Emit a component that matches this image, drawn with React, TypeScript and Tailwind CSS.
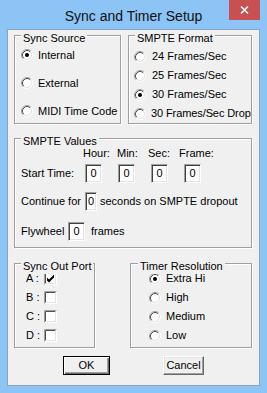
import React from 'react';

const uiFont = "font-['Liberation_Sans',Arial,sans-serif]";

function Radio({ checked = false }: { checked?: boolean }) {
  return (
    <svg width="12" height="12" viewBox="0 0 12 12" className="shrink-0">
      <circle cx="6" cy="6" r="4.5" fill="#fff" />
      {/* outer ring: dark top-left, light bottom-right */}
      <path d="M2.11 9.89 A5.5 5.5 0 0 1 9.89 2.11" fill="none" stroke="#a0a0a0" strokeWidth="1" />
      <path d="M9.89 2.11 A5.5 5.5 0 0 1 2.11 9.89" fill="none" stroke="#ffffff" strokeWidth="1" />
      <path d="M2.82 9.18 A4.5 4.5 0 0 1 9.18 2.82" fill="none" stroke="#505050" strokeWidth="1" />
      <path d="M9.18 2.82 A4.5 4.5 0 0 1 2.82 9.18" fill="none" stroke="#e3e3e3" strokeWidth="1" />
      {checked && <circle cx="6" cy="6" r="2" fill="#000" />}
    </svg>
  );
}

function Check({ checked = false }: { checked?: boolean }) {
  return (
    <svg width="13" height="13" viewBox="0 0 13 13" className="shrink-0">
      <rect x="0" y="0" width="13" height="13" fill="#fff" />
      <path d="M0.5 12.5 V0.5 H12.5" fill="none" stroke="#a0a0a0" />
      <path d="M1.5 11.5 V1.5 H11.5" fill="none" stroke="#505050" />
      <path d="M1.5 11.5 H11.5 V1.5" fill="none" stroke="#e3e3e3" />
      {checked && <path d="M3 5.5 L5 7.5 L10 2.5 L10 5.5 L5 10.5 L3 8.5 Z" fill="#000" />}
    </svg>
  );
}

function Group({ label, className, children, labelLeft = 'left-[6px]' }: {
  label: string; className: string; children: React.ReactNode; labelLeft?: string;
}) {
  return (
    <div className={`relative border border-[#a0a0a0] shadow-[inset_1px_1px_0_#fff,1px_1px_0_#fff] ${className}`}>
      <span className={`absolute -top-[5px] ${labelLeft} bg-[#f0f0f0] px-[2px] leading-[15px]`}>{label}</span>
      {children}
    </div>
  );
}

function Edit({ w = 'w-[17px]' }: { w?: string }) {
  return (
    <div className={`${w} h-[19px] bg-white border border-t-[#a0a0a0] border-l-[#a0a0a0] border-b-white border-r-white shadow-[inset_1px_1px_0_#404040,inset_-1px_-1px_0_#e3e3e3] flex items-center justify-center`}>
      0
    </div>
  );
}

export default function App() {
  return (
    <div className="w-[267px] h-[393px] bg-[#8bc4f5] flex flex-col overflow-hidden">
      {/* title bar */}
      <div className="h-[29px] grid grid-cols-[1fr_auto_1fr] items-start">
        <div />
        <div className="pt-[7px] text-[14px] leading-[18px] font-['Liberation_Sans',sans-serif] text-[#111]">
          Sync and Timer Setup
        </div>
        <div className="flex justify-end pr-[7px]">
          <button className="w-[31px] h-[20px] bg-[#c75050] flex items-center justify-center">
            <svg width="9" height="8" viewBox="0 0 9 8">
              <path d="M1 0.5 L8 7.5 M8 0.5 L1 7.5" stroke="#fff" strokeWidth="1.6" />
            </svg>
          </button>
        </div>
      </div>

      {/* client area */}
      <div className={`mx-[7px] h-[357px] border border-[#87a5c2] bg-[#f0f0f0] pl-[6px] pr-[7px] text-[11px] leading-[13px] text-black whitespace-nowrap ${uiFont}`}>
        <div className="mt-[5px] flex gap-[7px]">
          <Group label="Sync Source" className="w-[107px] h-[89px] pt-[5px] pl-[6px]">
            <div className="flex items-center h-[28px]"><Radio checked /><span className="ml-[5px]">Internal</span></div>
            <div className="flex items-center h-[28px]"><Radio /><span className="ml-[5px]">External</span></div>
            <div className="flex items-center h-[28px]"><Radio /><span className="ml-[5px]">MIDI Time Code</span></div>
          </Group>
          <Group label="SMPTE Format" className="flex-1 h-[89px] pt-[11px] pl-[5px]">
            <div className="flex items-center h-[19px]"><Radio /><span className="ml-[6px]">24 Frames/Sec</span></div>
            <div className="flex items-center h-[19px]"><Radio /><span className="ml-[6px]">25 Frames/Sec</span></div>
            <div className="flex items-center h-[19px]"><Radio checked /><span className="ml-[6px]">30 Frames/Sec</span></div>
            <div className="flex items-center h-[19px]"><Radio /><span className="ml-[5px] tracking-[-0.1px]">30 Frames/Sec Drop</span></div>
          </Group>
        </div>

        <Group label="SMPTE Values" className="mt-[14px] h-[110px] pt-[8px] pl-[6px]">
          <div className="flex items-center h-[13px] pl-[62px]">
            <span className="w-[34px]">Hour:</span>
            <span className="w-[31px]">Min:</span>
            <span className="w-[31px]">Sec:</span>
            <span>Frame:</span>
          </div>
          <div className="mt-[4px] flex items-center h-[19px]">
            <span className="w-[64px]">Start Time:</span>
            <div className="flex gap-[16px]">
              <Edit /><Edit /><Edit /><Edit />
            </div>
          </div>
          <div className="mt-[9px] flex items-center h-[19px]">
            <span className="w-[64px]">Continue for</span>
            <Edit w="w-[12px]" />
            <span className="ml-[3px]">seconds on SMPTE dropout</span>
          </div>
          <div className="mt-[11px] flex items-center h-[19px]">
            <span className="w-[47px]">Flywheel</span>
            <Edit />
            <span className="ml-[6px]">frames</span>
          </div>
        </Group>

        <div className="mt-[15px] flex gap-[35px]">
          <Group label="Sync Out Port" className="w-[81px] h-[85px] pt-[5px] pl-[11px]">
            {['A', 'B', 'C', 'D'].map((p, i) => (
              <div key={p} className="flex items-center h-[19px]">
                <span className="w-[18px]">{p} :</span>
                <Check checked={i === 0} />
              </div>
            ))}
          </Group>
          <Group label="Timer Resolution" labelLeft="left-[7px]" className="flex-1 h-[85px] pt-[5px] pl-[18px]">
            {['Extra Hi', 'High', 'Medium', 'Low'].map((r, i) => (
              <div key={r} className="flex items-center h-[19px]">
                <Radio checked={i === 0} />
                <span className="ml-[5px]">{r}</span>
              </div>
            ))}
          </Group>
        </div>

        <div className="mt-[8px] flex">
          <button className="ml-[49px] w-[47px] h-[19px] border border-black shadow-[inset_1px_1px_0_#fff,inset_-1px_-1px_0_#696969,inset_-2px_-2px_0_#a0a0a0] bg-[#f0f0f0] flex items-center justify-center">
            OK
          </button>
          <button className="ml-[53px] w-[41px] h-[19px] border border-t-white border-l-white border-b-[#696969] border-r-[#696969] shadow-[inset_-1px_-1px_0_#a0a0a0,inset_1px_1px_0_#e3e3e3] bg-[#f0f0f0] flex items-center justify-center">
            Cancel
          </button>
        </div>
      </div>
    </div>
  );
}
